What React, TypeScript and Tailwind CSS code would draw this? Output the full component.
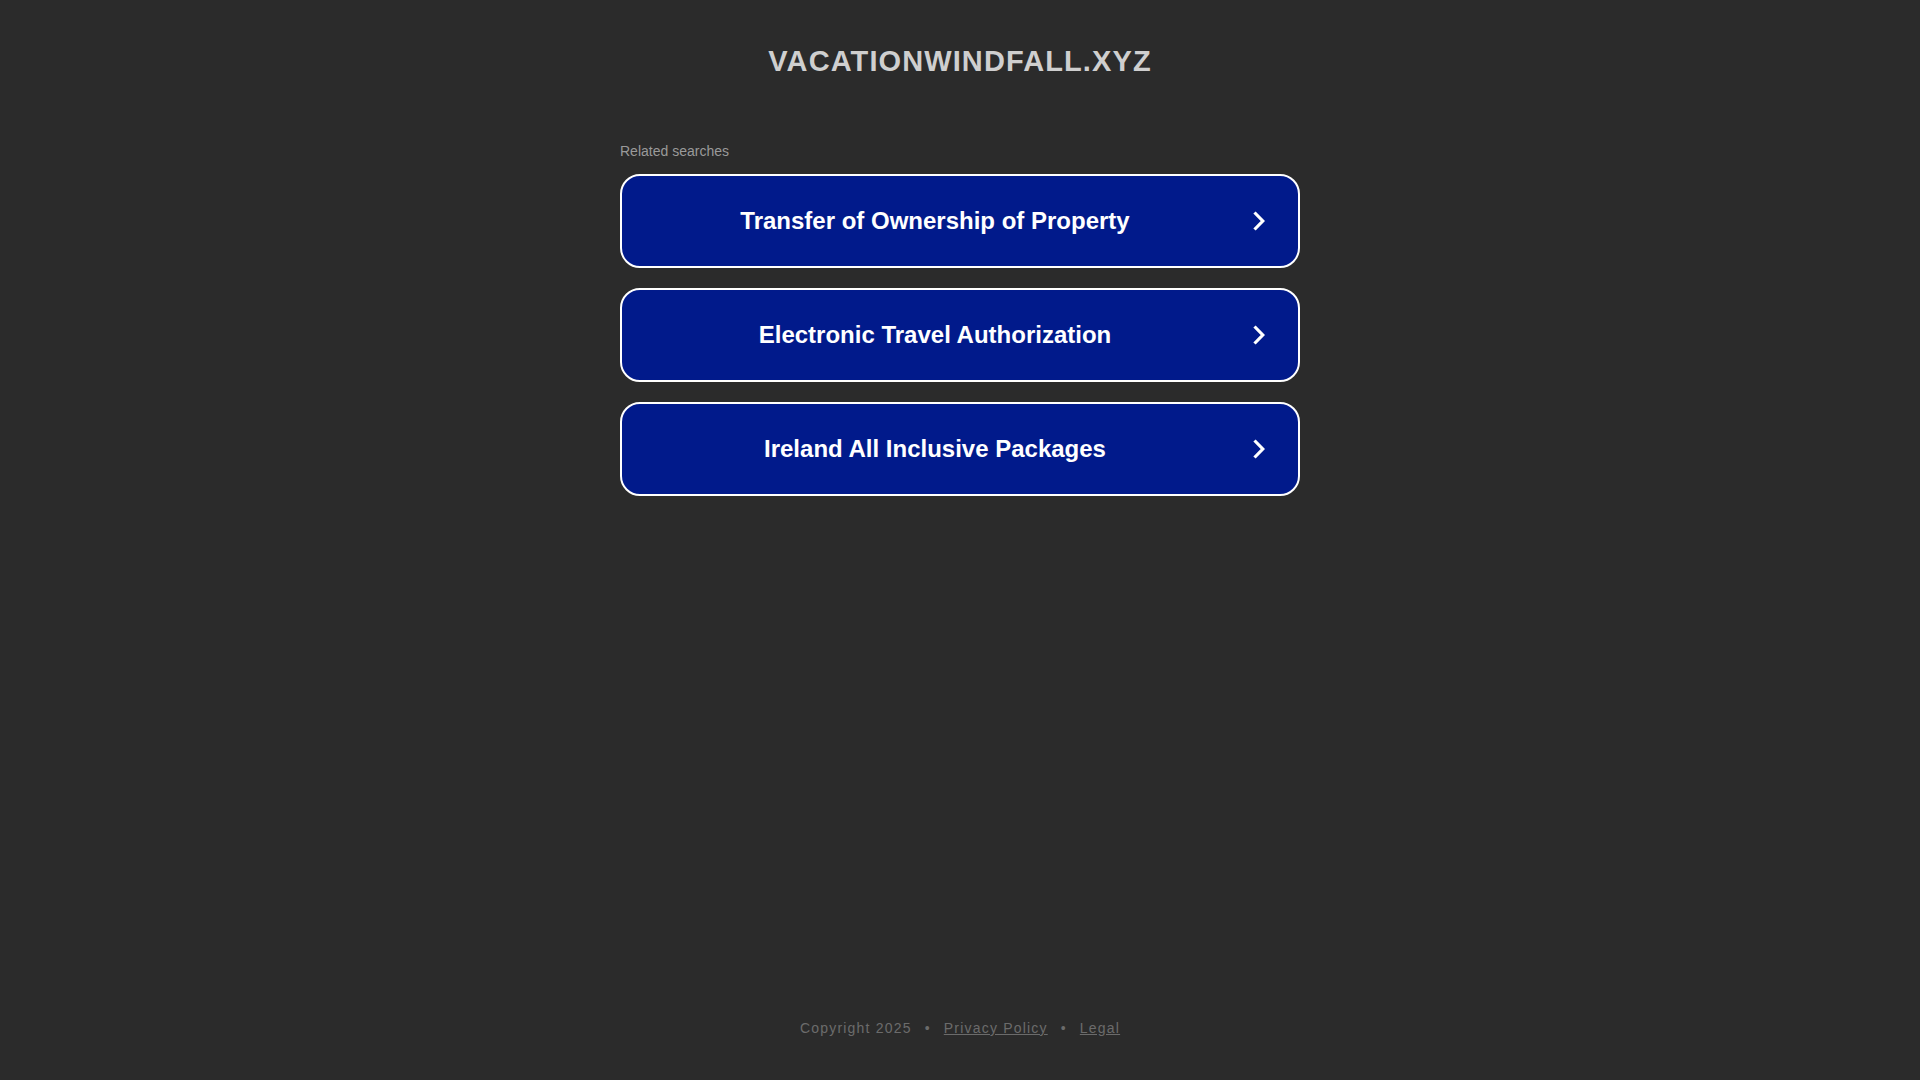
import React from "react";

const items = [
  "Transfer of Ownership of Property",
  "Electronic Travel Authorization",
  "Ireland All Inclusive Packages",
];

function Chevron() {
  return (
    <svg className="ml-[4px] mr-[33px] h-[20px] w-[13px] shrink-0" viewBox="0 0 13 20" fill="none">
      <path d="M2.5 1.5 L10.8 10 L2.5 18.5" stroke="#ffffff" strokeWidth="3.2" strokeLinecap="butt" strokeLinejoin="miter" />
    </svg>
  );
}

export default function App() {
  return (
    <div
      className="flex min-h-screen w-full flex-col bg-[#2b2b2b]"
      style={{ fontFamily: '"Liberation Sans", Arial, sans-serif' }}
    >
      <header className="flex h-[124px] items-center justify-center">
        <h1 className="text-[29px] font-bold tracking-[1.1px] text-[#cfcfcf]">VACATIONWINDFALL.XYZ</h1>
      </header>
      <main className="mx-auto mt-[18px] flex w-[680px] flex-col">
        <p className="mb-[14px] text-[14px] leading-[18px] text-[#9a9a9a]">Related searches</p>
        <div className="flex flex-col gap-[20px]">
          {items.map((t) => (
            <a
              key={t}
              href="#"
              className="flex h-[94px] items-center rounded-[20px] border-2 border-white bg-[#011a8b] text-white"
            >
              <span className="flex-1 text-center text-[24px] font-bold">{t}</span>
              <Chevron />
            </a>
          ))}
        </div>
      </main>
      <footer className="mt-auto flex items-center justify-center pb-[41px] text-[14px] tracking-[1.2px] text-[#6b6b6b]">
        <span>Copyright 2025</span>
        <span className="mx-[13px]">•</span>
        <a href="#" className="underline">Privacy Policy</a>
        <span className="mx-[13px]">•</span>
        <a href="#" className="underline">Legal</a>
      </footer>
    </div>
  );
}
